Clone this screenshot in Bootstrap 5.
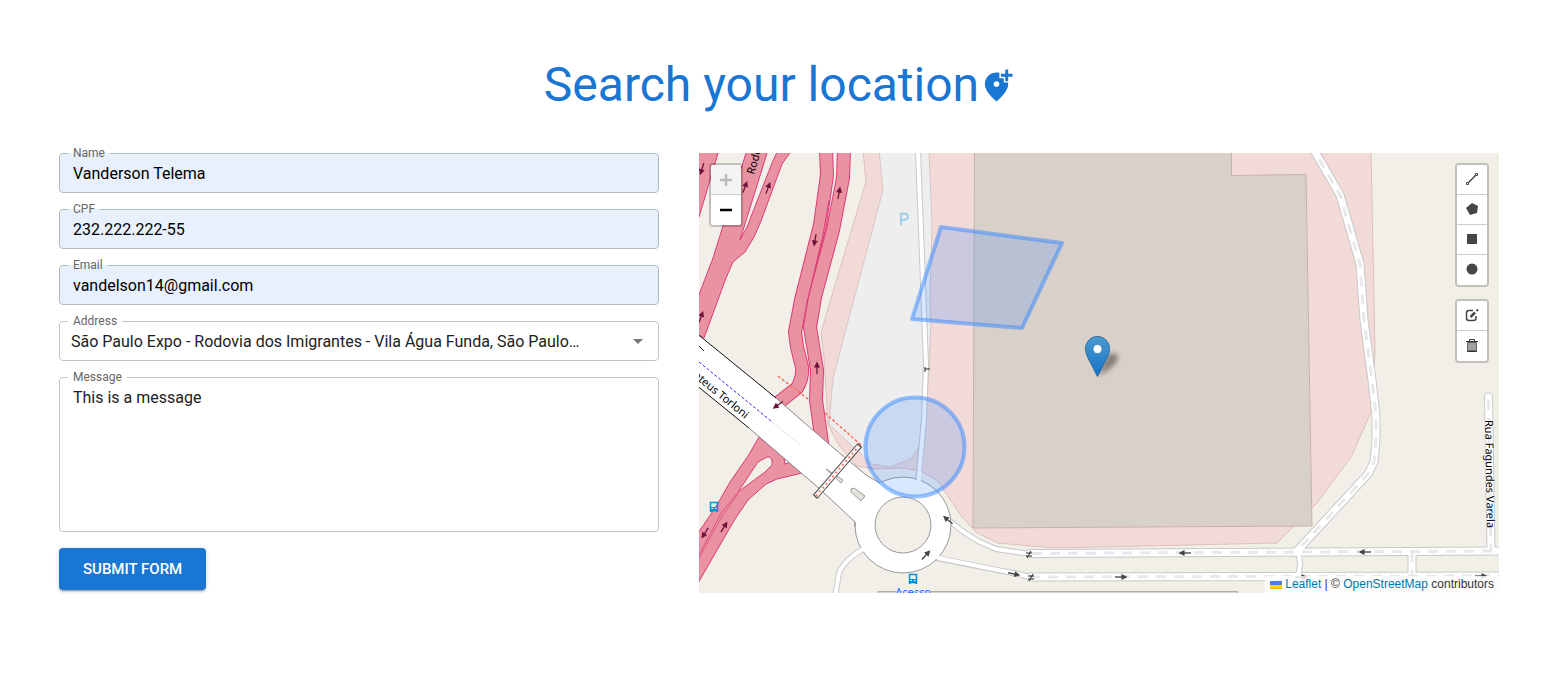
<!DOCTYPE html>
<html lang="en">
<head>
<meta charset="utf-8">
<meta name="viewport" content="width=device-width, initial-scale=1">
<title>Search your location</title>
<link href="https://cdn.jsdelivr.net/npm/bootstrap@5.3.0/dist/css/bootstrap.min.css" rel="stylesheet">
<style>
  body { font-family: Roboto, "Liberation Sans", sans-serif; color: #212121; }
  .page { padding: 57px 43px 56px 59px; }
  .page-title { font-size: 48px; line-height: 56px; color: #1976d2; font-weight: 400; margin-bottom: 40px; }
  .split { display: grid; grid-template-columns: minmax(0, 3fr) minmax(0, 4fr); gap: 40px; }
  @media (max-width: 900px) { .split { grid-template-columns: minmax(0, 1fr); } }

  .field { --fill: #fff; position: relative; }
  .field.filled { --fill: #e8f0fe; }
  .field label {
    position: absolute; left: 9px; top: -7px; padding: 0 5px;
    font-size: 12px; line-height: 14px; color: #666;
    background: linear-gradient(transparent 7px, var(--fill) 7px, var(--fill) 8px, transparent 8px);
  }
  .field .form-control, .field .form-select {
    font-size: 16px; line-height: 22px; padding: 9px 13px 7px;
    border: 1px solid #c4c4c4; border-radius: 4px;
    background-color: var(--fill); color: #212121;
  }
  .field.filled .form-control { border-color: #b2b8c3; color: #000; }
  .field .form-select {
    padding: 9px 40px 7px 11px; text-overflow: ellipsis;
    background-image: url("data:image/svg+xml,%3Csvg xmlns='http://www.w3.org/2000/svg' viewBox='0 0 24 24'%3E%3Cpath fill='%23757575' d='M7 10l5 5 5-5z'/%3E%3C/svg%3E");
    background-size: 24px; background-position: right 8px center;
  }
  .field textarea.form-control { line-height: 23px; padding: 8px 13px 7px; resize: none; }
  .btn-send {
    background: #1976d2; color: #fff; font-size: 15px; line-height: 26px; font-weight: 500;
    padding: 8px 24px; border: 0; border-radius: 4px;
    box-shadow: 0 3px 1px -2px rgba(0,0,0,.2), 0 2px 2px rgba(0,0,0,.14), 0 1px 5px rgba(0,0,0,.12);
  }
  .btn-send:hover { background: #1565c0; color: #fff; }

  .map { position: relative; height: 440px; overflow: hidden; background: #f2efe9; }
  .map-canvas { display: block; width: 100%; height: 100%; }
  .map-tools { position: absolute; top: 10px; display: flex; flex-direction: column; gap: 12px; }
  .map-tools.at-left { left: 10px; }
  .map-tools.at-right { right: 10px; }
  .tool-bar { border: 2px solid rgba(0,0,0,.2); border-radius: 4px; background-clip: padding-box; display: flex; flex-direction: column; }
  .tool-bar button {
    width: 30px; height: 30px; padding: 0; border: 0; border-bottom: 1px solid #ccc; background: #fff;
    display: flex; align-items: center; justify-content: center; color: #464646;
  }
  .at-right .tool-bar button { padding-bottom: 2px; }
  .tool-bar button:first-child { border-radius: 2px 2px 0 0; }
  .tool-bar button:last-child { border-bottom: 0; border-radius: 0 0 2px 2px; }
  .tool-bar button:disabled { background: #f4f4f4; color: #bbb; }
  .tool-bar .zoom-out { color: #000; }
  .credit {
    position: absolute; right: 0; bottom: 0; padding: 0 5px; background: rgba(255,255,255,.8);
    font: 12px/17px "Liberation Sans", sans-serif; color: #333;
  }
  .credit a { color: #0078a8; text-decoration: none; }

  .hw-edge { stroke: #dc3b74; fill: none; }
  .hw-fill { stroke: #e892a2; fill: none; }
  .hw-area { stroke: #dc3b74; fill: #e892a2; stroke-width: 1; }
  .rd-edge { stroke: #c8c8c8; fill: none; }
  .rd-fill { stroke: #fff; fill: none; }
  .rd-dash { stroke: #e8e8e8; fill: none; stroke-width: 3; stroke-dasharray: 10 8; }
  .place { font-family: "Noto Sans", sans-serif; font-size: 11px; fill: #000; stroke: #fff; stroke-width: 1; paint-order: stroke; }
</style>
</head>
<body>
<main class="container-fluid page">
  <h1 class="page-title d-flex justify-content-center align-items-center">
    <span>Search your location</span>
    <svg width="35" height="35" viewBox="0 0 24 24" fill="currentColor" aria-hidden="true"><path d="M20 1v3h3v2h-3v3h-2V6h-3V4h3V1h2zm-8 12c1.100 0 2-.9 2-2s-.9-2-2-2-2 .9-2 2 .9 2 2 2zm2-9.750V7h3v3h2.920c.05.390.08.790.08 1.200 0 3.320-2.670 7.250-8 11.800-5.330-4.550-8-8.480-8-11.800C4 6.220 7.800 3 12 3c.680 0 1.350.08 2 .250z"/></svg>
  </h1>

  <div class="split">
    <form class="d-flex flex-column gap-3">
      <div class="field filled"><input class="form-control" id="name" type="text" value="Vanderson Telema"><label for="name">Name</label></div>
      <div class="field filled"><input class="form-control" id="cpf" type="text" value="232.222.222-55"><label for="cpf">CPF</label></div>
      <div class="field filled"><input class="form-control" id="email" type="email" value="vandelson14@gmail.com"><label for="email">Email</label></div>
      <div class="field">
        <select class="form-select" id="address"><option>São Paulo Expo - Rodovia dos Imigrantes - Vila Água Funda, São Paulo…</option></select>
        <label for="address">Address</label>
      </div>
      <div class="field"><textarea class="form-control d-block" id="message" rows="6">This is a message</textarea><label for="message">Message</label></div>
      <div><button type="submit" class="btn btn-send">SUBMIT FORM</button></div>
    </form>

    <section class="map" aria-label="Map">
      <svg class="map-canvas" viewBox="699 153 800 440" preserveAspectRatio="xMidYMid slice">
        <defs>
          <g id="arrow"><path d="M-6 0H2" stroke="currentColor" stroke-width="1.300"/><path d="M0.500 -3L6.500 0L0.500 3Z" fill="currentColor"/></g>
          <g id="bus"><path d="M-3.500 -4.500H3.500V3.500H-3.500Z" fill="none" stroke="#0092da" stroke-width="1.500"/><path d="M-4 0H4V3H-4ZM-4 3H-2V5H-4ZM2 3H4V5H2Z" fill="#0092da"/><path d="M-2.500 1H-1V2H-2.500ZM1 1H2.500V2H1Z" fill="#fff"/></g>
          <linearGradient id="pin" x2="0" y2="1"><stop offset="0" stop-color="#4a9bd3"/><stop offset="1" stop-color="#1671c6"/></linearGradient>
          <filter id="soft" x="-50%" y="-50%" width="200%" height="200%"><feGaussianBlur stdDeviation="2.500"/></filter>
        </defs>

        <!-- land use -->
        <path fill="#f2dad9" stroke="#dcc0c0" d="M863 150L866 182L832 295L821 333L824 357L828 425L840 447L857 466L875 469L902 468L920 471L937 480L962 517L977 533L998 543L1020 545L1055 548L1277 543L1312 508L1317 503L1351 457L1372 410L1375 350L1371 150Z"/>
        <path fill="#eee" stroke="#d9c5c5" d="M879 150L883 190L855 295L833 378L829 424L851 445L872 464L890 467L911 459L919 447L925 385L928 385L931 325L930 300L932 225L929 150Z"/>
        <path fill="#d9d0c9" stroke="#c6b3a8" d="M974.500 150H1231.500V175.500L1306 174.500L1312 526L973 528Z"/>
        <path fill="#d9d0c9" stroke="#b9a99c" d="M878 597V591.500H1237.500V597"/>

        <!-- motorway and ramps -->
        <path class="hw-area" d="M690 150H719L699 217L690 240Z"/>
        <path class="hw-area" d="M747 150H768L740 240L747 227L772 163L778 150H792L782 164L761 221L754 237L745 252L733 262L726 278L704 338L690 330V318L713 258L723 226Z"/>
        <path class="hw-edge" stroke-width="14" d="M826 150L827 175L820 225L801 300L795 332L797 347L802 367Q803 378 797 388L778 403"/>
        <path class="hw-edge" stroke-width="14" d="M844 150L843 178L833 230L815 297L810 327L817 370L816 400L823 450"/>
        <path class="hw-fill" stroke-width="12" d="M826 150L827 175L820 225L801 300L795 332L797 347L802 367Q803 378 797 388L778 403"/>
        <path class="hw-fill" stroke-width="12" d="M844 150L843 178L833 230L815 297L810 327L817 370L816 400L823 450"/>
        <path class="hw-edge" d="M829 200L823 235L807 303"/>
        <path class="hw-area" d="M759 437L748 456L730 482L717 505L690 545V597L735 519L748 500L766 484L777 479L802 473Z"/>
        <path fill="#f2efe9" stroke="#dc3b74" d="M738 492L758 462L767 457Q773 456 772 465L765 472ZM784 459L785 464L791 462Z"/>
        <path class="hw-edge" d="M739 491L721 513L698 557M738 494L722 516L698 560" stroke-width=".7"/>

        <!-- local streets -->
        <g stroke-linejoin="round">
          <path class="rd-edge" stroke-width="6" d="M918 150L921 230L926 365L924 420L918 482"/>
          <path class="rd-edge" stroke-width="6" d="M863 549Q844 560 839 573L835 597"/>
          <path class="rd-edge" stroke-width="6" d="M945 517L965 533L978 541L996 549L1030 554M936 558L1018 574L1030 577M1297 550Q1303 564 1297 577"/>
          <path class="rd-edge" stroke-width="9" stroke-linecap="round" d="M1314 150L1340 195L1360 264L1364 320L1372 380L1376 415V440L1374 462L1368 474L1297 551M1030 553.500L1505 551M1030 577L1505 576M1412 552V576M1488.500 397L1491 551M1271 577V600M1438 577V600"/>
          <path class="rd-fill" stroke-width="4" d="M918 150L921 230L926 365L924 420L918 485M866 547Q844 560 839 573L835 597M942 515L965 533L978 541L996 549L1030 554M933 557L1018 574L1030 577M1297 550Q1303 564 1297 577"/>
          <path class="rd-fill" stroke-width="7" stroke-linecap="round" d="M1314 150L1340 195L1360 264L1364 320L1372 380L1376 415V440L1374 462L1368 474L1297 551M1030 553.500L1505 551M1030 577L1505 576M1412 552V576M1488.500 397L1491 551M1271 577V600M1438 577V600"/>
          <path class="rd-dash" d="M1319 159L1340 195L1360 264L1364 320L1372 380L1376 415V440L1374 462L1368 474L1297 551M1032 553.500L1499 551M1030 577L1499 576M1412 552V576M1488.500 400L1491 551"/>
        </g>

        <!-- viaduct and roundabout -->
        <path fill="#fff" d="M690 328L776 398L830 445L866 475L882 483L860 527L855 523L821 490L749 428L690 380Z"/>
        <circle cx="903" cy="525" r="48" fill="#fff" stroke="#999"/>
        <path fill="#fff" d="M840 460L866 475L884 484L866 520L856 523L830 498Z"/>
        <path fill="none" stroke="#111" d="M690 328L776 398M690 380L749 428"/>
        <path fill="none" stroke="#888" d="M776 398L830 445L866 475L880 483M749 428L821 490L855 522V527"/>
        <path stroke="#fff" stroke-width="4" d="M920 472L918 486M941 514L948 520M934 556L942 559M867 547L860 551"/>
        <circle cx="903" cy="525" r="28" fill="#f2efe9" stroke="#999"/>
        <path stroke="#2a2aff" stroke-dasharray="3 2" d="M699 362L771 421" fill="none"/>
        <path stroke="#e6e6e6" d="M771 421L800 445" fill="none"/>
        <path fill="#e6e3dc" stroke="#999" d="M851 489L854 488L865 496L861 501L851 492ZM826 469L843 480L841 483Z"/>
        <path stroke="#fa6f62" stroke-width="1.500" stroke-dasharray="3 2" fill="none" d="M778 376L808 399M825 413L861 445"/>
        <path d="M815 497L860 445" stroke="#555" stroke-width="6"/>
        <path d="M816 496L859 446" stroke="#fff" stroke-width="4"/>
        <path d="M816 496L859 446" stroke="#fa8072" stroke-width="2" stroke-dasharray="2 3"/>

        <!-- one-way arrows -->
        <g color="#6f1139">
          <use href="#arrow" transform="translate(702 169) rotate(107)"/>
          <use href="#arrow" transform="translate(745 187) rotate(-70)"/>
          <use href="#arrow" transform="translate(768 188) rotate(-70)"/>
          <use href="#arrow" transform="translate(839 193) rotate(-80)"/>
          <use href="#arrow" transform="translate(815 240) rotate(100)"/>
          <use href="#arrow" transform="translate(701 317) rotate(-70)"/>
          <use href="#arrow" transform="translate(817 368) rotate(-90)"/>
          <use href="#arrow" transform="translate(778 405) rotate(145)"/>
          <use href="#arrow" transform="translate(705 533) rotate(122)"/>
          <use href="#arrow" transform="translate(724 527) rotate(-58)"/>
        </g>
        <g color="#444">
          <use href="#arrow" transform="translate(948 520) rotate(-140)"/>
          <use href="#arrow" transform="translate(926 555) rotate(-48)"/>
          <use href="#arrow" transform="translate(1014 574) rotate(12)"/>
          <use href="#arrow" transform="translate(1121 577)"/>
          <use href="#arrow" transform="translate(1185 553) rotate(180)"/>
          <use href="#arrow" transform="translate(1365 552) rotate(180)"/>
          <use href="#arrow" transform="translate(1301 577)"/>
          <use href="#arrow" transform="translate(1481 576)"/>
        </g>
        <path d="M1026 553H1032M1026 556H1032M1027 558L1031 551M1028 576H1034M1028 579H1034M1029 581L1033 574M925 367V372M925 369H930M699 346L704 351" stroke="#222" fill="none"/>
        <use href="#bus" transform="translate(714 507)"/>
        <use href="#bus" transform="translate(913 579)"/>

        <!-- names -->
        <text class="place" transform="translate(745 419) rotate(39)" text-anchor="end">ateus Torloni</text>
        <text class="place" transform="translate(754 175) rotate(-74)" style="stroke:none">Rodo</text>
        <text class="place" transform="translate(1485 420) rotate(89)">Rua Fagundes Varela</text>
        <text class="place" x="913" y="596" text-anchor="middle" style="fill:#0066ff">Acesso</text>
        <text x="904" y="225" text-anchor="middle" font-family="Liberation Sans, sans-serif" font-size="16" fill="#9acfe9" stroke="#9acfe9" stroke-width=".4">P</text>

        <!-- drawn shapes -->
        <g fill="#3388ff" fill-opacity=".2" stroke="#3388ff" stroke-opacity=".5" stroke-width="4" stroke-linejoin="round">
          <path d="M941 227L1062 243L1022 328L912 319Z"/>
          <circle cx="915" cy="447" r="49.500"/>
        </g>

        <!-- marker -->
        <path d="M1098 376L1108 354Q1119 352 1118 359Q1114 368 1098 376Z" fill="#000" opacity=".4" filter="url(#soft)"/>
        <g transform="translate(1085 336)">
          <path d="M12.500 .5C6 .5 .5 6 .5 12.500C.5 16 1.500 19 3.500 23L12.500 40.500L21.500 23C23.500 19 24.500 16 24.500 12.500C24.500 6 19 .5 12.500 .5Z" fill="url(#pin)" stroke="#2e6c97"/>
          <circle cx="12.500" cy="13" r="4.500" fill="#fff" stroke="#2e78b0" stroke-width=".7"/>
        </g>
      </svg>

      <div class="map-tools at-left">
        <div class="tool-bar">
          <button type="button" disabled aria-label="Zoom in"><svg width="12" height="12"><path d="M6 0V12M0 6H12" stroke="currentColor" stroke-width="2.500"/></svg></button>
          <button type="button" class="zoom-out" aria-label="Zoom out"><svg width="12" height="12"><path d="M0 6H12" stroke="currentColor" stroke-width="2.500"/></svg></button>
        </div>
      </div>

      <div class="map-tools at-right">
        <div class="tool-bar">
          <button type="button" aria-label="Draw a polyline"><svg width="14" height="14" fill="none" stroke="currentColor"><path d="M3 11L11 3" stroke-width="1.500"/><path d="M1.500 10.500H3.500V12.500H1.500ZM10.500 1.500H12.500V3.500H10.500Z" fill="#fff"/></svg></button>
          <button type="button" aria-label="Draw a polygon"><svg width="14" height="14" fill="currentColor"><path d="M7 1L13 4L12 11L5 13L1 6Z"/></svg></button>
          <button type="button" aria-label="Draw a rectangle"><svg width="10" height="10" fill="currentColor"><path d="M0 0H10V10H0Z"/></svg></button>
          <button type="button" aria-label="Draw a circle"><svg width="12" height="12" fill="currentColor"><circle cx="6" cy="6" r="5.500"/></svg></button>
        </div>
        <div class="tool-bar">
          <button type="button" aria-label="Edit layers"><svg width="14" height="14" fill="none" stroke="currentColor" stroke-width="1.500"><path d="M8 2.500H4Q1.500 2.500 1.500 5V10Q1.500 12.500 4 12.500H8.500Q11 12.500 11 10V8"/><path d="M5.500 9L10 4.500" stroke-width="2.500"/><path d="M11.500 3L13 1.500" stroke-width="2"/></svg></button>
          <button type="button" aria-label="Delete layers"><svg width="12" height="14"><path d="M1.500 4.500H10.500V12.500H1.500Z" fill="#a0a0a0" stroke="#666"/><path d="M0 3.500H12M3.500 3V1.500H8.500V3M1 13.500H11" fill="none" stroke="#333"/></svg></button>
        </div>
      </div>

      <div class="credit"><a href="#leaflet"><svg width="12" height="8" viewBox="0 0 12 8" aria-hidden="true"><path fill="#4c7be1" d="M0 0h12v4H0z"/><path fill="#ffd500" d="M0 4h12v3H0z"/><path fill="#e0bc00" d="M0 7h12v1H0z"/></svg> Leaflet</a> | © <a href="#osm">OpenStreetMap</a> contributors</div>
    </section>
  </div>
</main>
<script src="https://cdn.jsdelivr.net/npm/bootstrap@5.3.0/dist/js/bootstrap.bundle.min.js"></script>
</body>
</html>
